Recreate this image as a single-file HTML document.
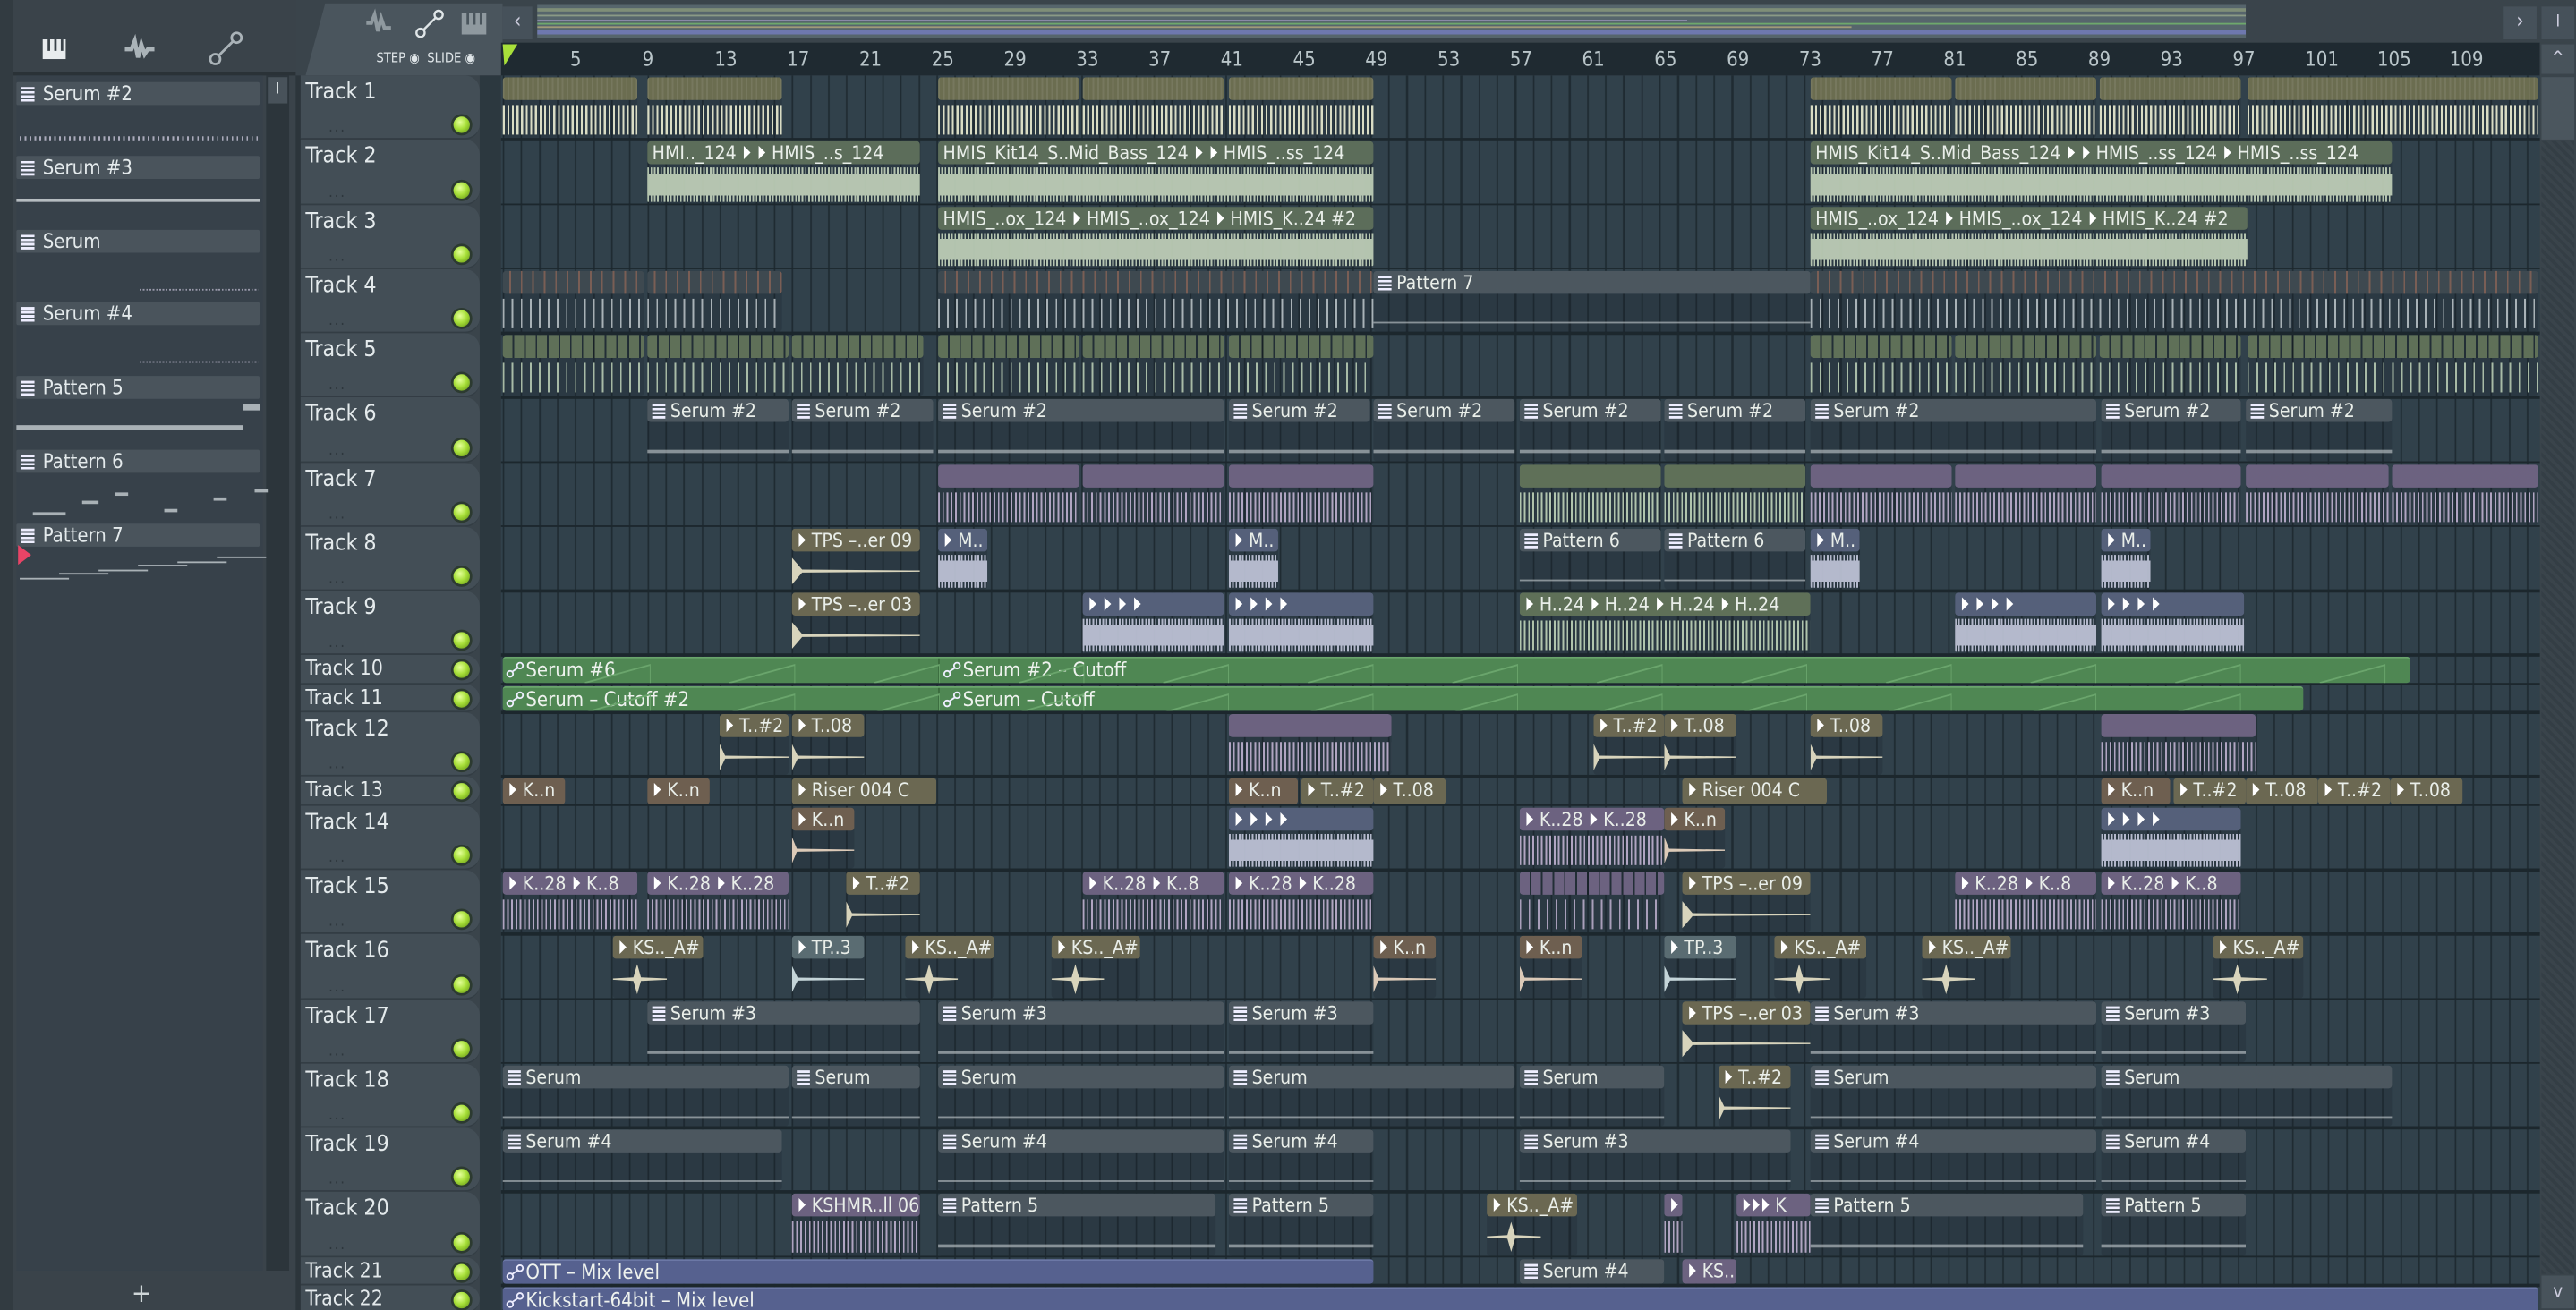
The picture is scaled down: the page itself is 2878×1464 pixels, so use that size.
<!DOCTYPE html>
<html><head><meta charset="utf-8">
<style>
html,body{margin:0;padding:0;width:2878px;height:1464px;overflow:hidden;background:#2f3b42;}
#w{position:absolute;left:0;top:0;width:1568px;height:798px;transform-origin:0 0;transform:scale(1.835459,1.834586);font-family:"Liberation Sans Narrow","DejaVu Sans Condensed","Liberation Sans",sans-serif;font-stretch:condensed;color:#dfe6e8;overflow:hidden;background:#3a444b;}
.a{position:absolute;box-sizing:border-box;}
.clip{position:absolute;box-sizing:border-box;overflow:hidden;border-radius:2px;}
.hd{position:absolute;left:0;right:0;top:0;height:14px;font-size:11.5px;line-height:14px;padding-left:3px;white-space:nowrap;color:#e9eee9;border-radius:2px;}
.bd{position:absolute;left:0;right:0;top:15px;bottom:0;}
.th{position:absolute;left:183px;width:109px;background:#434e56;border-radius:0 9px 9px 0;box-sizing:border-box;border-bottom:1px solid #333d44;}
.th .n{position:absolute;left:3px;top:2px;font-size:13.5px;color:#e4eaec;}
.led{position:absolute;left:276px;width:10px;height:10px;border-radius:50%;background:radial-gradient(circle at 40% 35%,#e4ff9a 0,#a8e03a 45%,#5f8f10 100%);box-shadow:0 0 0 1.5px #2c3a30;}
.dots{position:absolute;left:200px;font-size:9px;color:#2d363c;letter-spacing:1px;}
.pi{position:absolute;left:10px;width:148px;}
.pih{height:14px;background:#4a545c;font-size:12px;line-height:14px;padding-left:16px;position:relative;color:#e4eaec;border-radius:1px;}
.ic{position:absolute;left:3px;top:3px;width:8px;height:9px;background:repeating-linear-gradient(#eef 0 1.5px,#4a545c 1.5px 2.5px);}
.num{position:absolute;top:29px;font-size:12px;color:#b9c5c9;}
</style></head><body>
<div id="w">
<div class="a" style="left:0;top:0;width:8px;height:798px;background:#323b41"></div>
<div class="a" style="left:8px;top:0;width:172px;height:798px;background:#3a434a"></div>
<div class="a" style="left:8px;top:44px;width:172px;height:2px;background:#2a3237"></div>
<div class="a" style="left:10px;top:46px;width:150px;height:728px;background:#37414a"></div>
<div class="a" style="left:162px;top:46px;width:14px;height:728px;background:#2c353b"></div>
<div class="a" style="left:163px;top:47px;width:12px;height:16px;background:#48525a;font-size:9px;text-align:center;line-height:16px;">I</div>
<div class="a" style="left:80px;top:778px;font-size:16px;color:#cfd6d8">+</div>
<svg class="a" style="left:20px;top:18px" width="150" height="26">
 <rect x="6" y="6" width="14" height="12" fill="#e8ecee"/><rect x="9" y="6" width="1.5" height="7" fill="#3a434a"/><rect x="13" y="6" width="1.5" height="7" fill="#3a434a"/><rect x="17" y="6" width="1.5" height="7" fill="#3a434a"/>
 <path d="M56 12 h4 l2-5 l2 10 l2-8 l2 6 l2-3 h4" stroke="#aab3b8" stroke-width="2.5" fill="none"/>
 <circle cx="111" cy="18" r="3" fill="none" stroke="#aab3b8" stroke-width="1.5"/><circle cx="124" cy="5" r="3" fill="none" stroke="#aab3b8" stroke-width="1.5"/><path d="M113 16 L122 7" stroke="#aab3b8" stroke-width="1.5"/>
</svg>
<div class="a" style="left:186px;top:2px;width:120px;height:44px;background:#4a555d;border-radius:12px 0 0 0;clip-path:polygon(10% 0,100% 0,100% 100%,0 100%);"></div>
<svg class="a" style="left:220px;top:4px" width="86" height="20">
 <path d="M3 10 h3 l2-5 l2 10 l2-8 l2 6 h4" stroke="#8f999f" stroke-width="2.2" fill="none"/>
 <circle cx="36" cy="16" r="2.5" fill="none" stroke="#e0e6e8" stroke-width="1.3"/><circle cx="47" cy="5" r="2.5" fill="none" stroke="#e0e6e8" stroke-width="1.3"/><path d="M38 14 L45 7" stroke="#e0e6e8" stroke-width="1.3"/>
 <rect x="61" y="4" width="15" height="13" fill="#8f999f"/><rect x="64" y="4" width="1.5" height="7" fill="#4a555d"/><rect x="68" y="4" width="1.5" height="7" fill="#4a555d"/><rect x="72" y="4" width="1.5" height="7" fill="#4a555d"/>
</svg>
<div class="a" style="left:229px;top:31px;font-size:8px;color:#dfe5e8;">STEP &#9673;&nbsp; SLIDE &#9673;</div>
<div class="a" style="left:306px;top:0;width:1262px;height:26px;background:#3a444b"></div>
<div class="a" style="left:306px;top:4px;width:18px;height:20px;background:#46515a;font-size:13px;text-align:center;line-height:20px;color:#ccd">&lsaquo;</div>
<div class="a" style="left:327px;top:3px;width:1040px;height:20px;background:#56656c;overflow:hidden">
 <div class="a" style="left:0;top:2px;width:1040px;height:2px;background:#7f8e78"></div>
 <div class="a" style="left:0;top:6px;width:1040px;height:1px;background:#8a9a86"></div>
 <div class="a" style="left:0;top:9px;width:700px;height:1px;background:#8a8aa8"></div>
 <div class="a" style="left:0;top:11px;width:1040px;height:1px;background:#6ea86c"></div>
 <div class="a" style="left:0;top:13px;width:800px;height:1px;background:#a09a78"></div>
 <div class="a" style="left:0;top:15px;width:1040px;height:3px;background:#6e78ae"></div>
</div>
<div class="a" style="left:1524px;top:4px;width:20px;height:20px;background:#46515a;font-size:13px;text-align:center;line-height:20px;color:#ccd">&rsaquo;</div>
<div class="a" style="left:1547px;top:4px;width:20px;height:20px;background:#46515a;font-size:10px;text-align:center;line-height:20px;color:#ccd">I</div>
<div class="a" style="left:305px;top:26px;width:1241px;height:20px;background:#1f2a31"></div>
<svg class="a" style="left:305px;top:27px" width="12" height="14"><path d="M1 0 L10 0 L2 13 Z" fill="#a8e03a"/></svg>
<div class="a" style="left:1546px;top:26px;width:22px;height:772px;background:#3a444b"></div>
<div class="a" style="left:1547px;top:27px;width:20px;height:18px;background:#48535b;font-size:11px;text-align:center;line-height:18px;color:#ccd">^</div>
<div class="a" style="left:1547px;top:47px;width:20px;height:38px;background:#4b565e"></div>
<div class="a" style="left:1547px;top:86px;width:20px;height:690px;background:repeating-linear-gradient(45deg,#343e45 0 2px,#3a444b 2px 4px)"></div>
<div class="a" style="left:1547px;top:777px;width:20px;height:20px;background:#48535b;font-size:11px;text-align:center;line-height:20px;color:#ccd">v</div>
<div class="a" style="left:180px;top:46px;width:3px;height:752px;background:#2c353b"></div>
<div class="a" style="left:292px;top:46px;width:13px;height:752px;background:#2c383f"></div>
<div id="grid" class="a" style="left:305px;top:46px;width:1241px;height:752px;background-color:#31414b;background-image:repeating-linear-gradient(90deg,#1f2b32 0 1px,transparent 1px 11px);background-position:1px 0;"></div>
<div id="dyn"></div>
</div>
<script>
var dyn=document.getElementById('dyn'),h='';
for(var n=1;n<=109;n+=4){var x=306+(n-1)*11;h+='<div class="num" style="left:'+(x+(n==1?1:-3))+'px">'+(n==1?'':n)+'</div>';}
var H=39.25,S=17.44,hs=[H,H,H,H,H,H,H,H,H,S,S,H,S,H,H,H,H,H,H,H,S,S],tops=[],y=46;
for(var i=0;i<22;i++){tops.push(y);y+=hs[i];}
for(var i=0;i<22;i++){var t=tops[i],hh=hs[i];
 h+='<div class="th" style="top:'+t+'px;height:'+hh+'px"><div class="n" style="'+(hh<20?'top:0;font-size:12.5px':'')+'">Track '+(i+1)+'</div></div>';
 h+='<div class="led" style="top:'+(t+hh-(hh<20?13.5:14))+'px"></div>';
 if(hh>20)h+='<div class="dots" style="top:'+(t+hh-12)+'px">...</div>';
 h+='<div class="a" style="left:305px;top:'+(t+hh-1)+'px;width:1241px;height:1.5px;background:#1c272d"></div>';
}
var pk=[['Serum #2','d'],['Serum #3','l'],['Serum','t'],['Serum #4','t'],['Pattern 5','p5'],['Pattern 6','p6'],['Pattern 7','p7']];
for(var i=0;i<7;i++){var t=50+i*44.8;
 h+='<div class="pi" style="top:'+t+'px"><div class="pih"><span class="ic"></span>'+pk[i][0]+'</div></div>';
 var b=t+15,k=pk[i][1];
 if(k=='d')h+='<div class="a" style="left:12px;top:'+(b+18)+'px;width:145px;height:3px;background:repeating-linear-gradient(90deg,#aab 0 1px,transparent 1px 3px)"></div>';
 if(k=='l')h+='<div class="a" style="left:10px;top:'+(b+11)+'px;width:148px;height:2px;background:#b5bcc0"></div>';
 if(k=='t')h+='<div class="a" style="left:85px;top:'+(b+21)+'px;width:72px;height:1px;background:repeating-linear-gradient(90deg,#99a 0 1px,transparent 1px 2px)"></div>';
 if(k=='p5'){h+='<div class="a" style="left:10px;top:'+(b+15)+'px;width:138px;height:3px;background:#a9b1b6"></div><div class="a" style="left:148px;top:'+(b+2)+'px;width:10px;height:4px;background:#a9b1b6"></div>';}
 if(k=='p6'){[[10,30,15],[40,50,8],[60,45,3],[90,60,13],[120,85,6],[145,148,1]].forEach(function(q){h+='<div class="a" style="left:'+(q[0]+10)+'px;top:'+(b+q[2]+8)+'px;width:'+(Math.max(8,q[1]-q[0]))+'px;height:1.5px;background:#a9b1b6"></div>'});}
 if(k=='p7'){for(var j=0;j<6;j++)h+='<div class="a" style="left:'+(12+j*24)+'px;top:'+(b+18-j*2.5)+'px;width:30px;height:1px;background:#a9b1b6"></div>';
  h+='<svg class="a" style="left:10px;top:'+(b-3)+'px" width="10" height="14"><path d="M1 1 L9 7 L1 13 Z" fill="#e84466"/></svg>';}
}
var C={o:['#6b6d50','#d9dcc4','spk'],h:['#5c6d5a','#c4d4bc','den'],p:['#4c575f','#b0b8bc','pat'],u:['#6c6280','#c8b8d8','spk'],b:['#55607a','#c4c8dc','den'],t:['#6b6852','#d8d4bc','dec'],k:['#6e5f50','#dccab8','dec'],g:['#5f7058','#c8dcc0','spk'],s:['#6b6852','#d8d4bc','star'],c:['#5a6c72','#c4d4d8','dec'],a:['#4f8753'],v:['#56618f'],d:['#3f4a50','#c8d0d4','spk']};
var T=[
[[306,388,'o',''],[394,476,'o',''],[571,657,'o',''],[659,745,'o',''],[748,836,'o',''],[1102,1188,'o',''],[1190,1276,'o',''],[1278,1364,'o',''],[1368,1545,'o','']],
[[394,560,'h','HMI.._124 ▸ ▸ HMIS_..s_124'],[571,836,'h','HMIS_Kit14_S..Mid_Bass_124 ▸ ▸ HMIS_..ss_124'],[1102,1456,'h','HMIS_Kit14_S..Mid_Bass_124 ▸ ▸ HMIS_..ss_124 ▸ HMIS_..ss_124']],
[[571,836,'h','HMIS_..ox_124 ▸ HMIS_..ox_124 ▸ HMIS_K..24 #2'],[1102,1368,'h','HMIS_..ox_124 ▸ HMIS_..ox_124 ▸ HMIS_K..24 #2']],
[[306,392,'d2',''],[394,476,'d2',''],[571,836,'d2',''],[836,1102,'p','Pattern 7'],[1102,1545,'d2','']],
[[306,392,'g2',''],[394,480,'g2',''],[482,562,'g2',''],[571,657,'g2',''],[659,745,'g2',''],[748,836,'g2',''],[1102,1188,'g2',''],[1190,1276,'g2',''],[1278,1364,'g2',''],[1368,1545,'g2','']],
[[394,480,'p','Serum #2'],[482,568,'p','Serum #2'],[571,745,'p','Serum #2'],[748,834,'p','Serum #2'],[836,922,'p','Serum #2'],[925,1011,'p','Serum #2'],[1013,1099,'p','Serum #2'],[1102,1276,'p','Serum #2'],[1279,1364,'p','Serum #2'],[1367,1456,'p','Serum #2']],
[[571,657,'u',''],[659,745,'u',''],[748,836,'u',''],[925,1011,'g',''],[1013,1099,'g',''],[1102,1188,'u',''],[1190,1276,'u',''],[1279,1364,'u',''],[1367,1454,'u',''],[1456,1545,'u','']],
[[482,560,'t','▸ TPS –..er 09'],[571,601,'b','▸ M..'],[748,778,'b','▸ M..'],[925,1011,'p','Pattern 6'],[1013,1099,'p','Pattern 6'],[1102,1132,'b','▸ M..'],[1279,1309,'b','▸ M..']],
[[482,560,'t','▸ TPS –..er 03'],[659,745,'b','▸  ▸  ▸  ▸'],[748,836,'b','▸  ▸  ▸  ▸'],[925,1102,'g','▸ H..24 ▸ H..24 ▸ H..24 ▸ H..24'],[1190,1276,'b','▸  ▸  ▸  ▸'],[1279,1366,'b','▸  ▸  ▸  ▸']],
[[306,1467,'a','Serum #6',571,'Serum #2 – Cutoff']],
[[306,1402,'a','Serum – Cutoff #2',571,'Serum – Cutoff']],
[[438,480,'t','▸ T..#2'],[482,526,'t','▸ T..08'],[748,847,'u',''],[970,1013,'t','▸ T..#2'],[1013,1057,'t','▸ T..08'],[1102,1146,'t','▸ T..08'],[1279,1373,'u','']],
[[306,344,'k','▸ K..n'],[394,432,'k','▸ K..n'],[482,570,'t','▸ Riser 004 C'],[748,790,'k','▸ K..n'],[792,836,'t','▸ T..#2'],[836,880,'t','▸ T..08'],[1024,1112,'t','▸ Riser 004 C'],[1279,1321,'k','▸ K..n'],[1323,1367,'t','▸ T..#2'],[1367,1411,'t','▸ T..08'],[1411,1455,'t','▸ T..#2'],[1455,1499,'t','▸ T..08']],
[[482,520,'k','▸ K..n'],[748,836,'b','▸  ▸  ▸  ▸'],[925,1013,'u','▸ K..28 ▸ K..28'],[1013,1050,'k','▸ K..n'],[1279,1364,'b','▸  ▸  ▸  ▸']],
[[306,388,'u','▸ K..28 ▸ K..8'],[394,480,'u','▸ K..28 ▸ K..28'],[515,560,'t','▸ T..#2'],[659,745,'u','▸ K..28 ▸ K..8'],[748,836,'u','▸ K..28 ▸ K..28'],[925,1013,'u2',''],[1024,1102,'t','▸ TPS –..er 09'],[1190,1276,'u','▸ K..28 ▸ K..8'],[1279,1364,'u','▸ K..28 ▸ K..8']],
[[373,428,'s','▸ KS.._A#'],[482,526,'c','▸ TP..3'],[551,605,'s','▸ KS.._A#'],[640,694,'s','▸ KS.._A#'],[836,874,'k','▸ K..n'],[925,963,'k','▸ K..n'],[1013,1057,'c','▸ TP..3'],[1080,1136,'s','▸ KS.._A#'],[1170,1224,'s','▸ KS.._A#'],[1347,1402,'s','▸ KS.._A#']],
[[394,560,'p','Serum #3'],[571,745,'p','Serum #3'],[748,836,'p','Serum #3'],[1024,1102,'t','▸ TPS –..er 03'],[1102,1276,'p','Serum #3'],[1279,1367,'p','Serum #3']],
[[306,480,'p','Serum'],[482,560,'p','Serum'],[571,745,'p','Serum'],[748,922,'p','Serum'],[925,1013,'p','Serum'],[1046,1090,'t','▸ T..#2'],[1102,1276,'p','Serum'],[1279,1456,'p','Serum']],
[[306,476,'p','Serum #4'],[571,745,'p','Serum #4'],[748,836,'p','Serum #4'],[925,1090,'p','Serum #3'],[1102,1276,'p','Serum #4'],[1279,1367,'p','Serum #4']],
[[482,560,'u','▸ KSHMR..ll 06'],[571,740,'p','Pattern 5'],[748,836,'p','Pattern 5'],[905,960,'s','▸ KS.._A#'],[1013,1024,'u','▸'],[1057,1102,'u','▸▸▸ K'],[1102,1268,'p','Pattern 5'],[1279,1367,'p','Pattern 5']],
[[306,836,'v','OTT – Mix level'],[925,1013,'p','Serum #4'],[1024,1057,'u','▸ KS..']],
[[306,1545,'v','Kickstart-64bit – Mix level']]
];
function autoIcon(){return '<svg width="11" height="10" style="vertical-align:-1px;margin-right:1px"><circle cx="2.5" cy="7.5" r="1.8" fill="none" stroke="#eef" stroke-width="1"/><circle cx="8.5" cy="2.5" r="1.8" fill="none" stroke="#eef" stroke-width="1"/><path d="M4 6 L7 4" stroke="#eef"/></svg>';}
for(var i=0;i<22;i++){var t=tops[i],hh=hs[i];
 T[i].forEach(function(c){
  var x=c[0],w=c[1]-c[0],ty=c[2],lab=c[3];
  if(ty=='a'||ty=='v'){
   h+='<div class="clip" style="left:'+x+'px;top:'+(t+1)+'px;width:'+w+'px;height:'+(hh-2)+'px;background:'+C[ty][0]+';border-top:1px solid '+(ty=='a'?'#6aa56c':'#6c78a6')+';font-size:12px;line-height:'+(hh-3)+'px;padding-left:2px;color:#eef2ee;white-space:nowrap">'+autoIcon()+lab;
   if(c[4])h+='<span style="position:absolute;left:'+(c[4]-x)+'px;top:0;border-left:1px solid #3b6b3e;padding-left:2px">'+autoIcon()+c[5]+'</span>';
   if(ty=='a'){for(var z=x+90;z<c[1];z+=88)h+='<svg class="a" style="left:'+(z-x-40)+'px;top:0" width="40" height="16"><path d="M0 15 L40 4 L40 16" stroke="#6aa56c" fill="none" stroke-width="1"/></svg>';}
   h+='</div>';return;}
  var base=ty.replace('2',''),col=C[base],sm=hh<20;
  var hb=col[0];
  var hdr='';
  if(base=='o'){hdr='background:'+hb+' repeating-linear-gradient(90deg,rgba(255,255,255,.08) 0 1px,transparent 1px 3px);';}
  else if(ty=='d2'){hdr='background:repeating-linear-gradient(90deg,#3e4950 0 4px,#7a5e55 4px 5px,#3e4950 5px 7px);';}
  else if(ty=='u2'||ty=='g2'){hdr='background:repeating-linear-gradient(90deg,'+hb+' 0 6px,rgba(0,0,0,.2) 6px 7px);';}
  else hdr='background:'+hb+';';
  var ic=(base=='p')?'<span style="display:inline-block;width:8px;height:9px;margin:0 3px -1px 0;background:repeating-linear-gradient(#eef 0 1.5px,'+hb+' 1.5px 2.5px)"></span>':'';
  var txt=lab.replace(/▸/g,'<b style="font-weight:normal;color:#fff">⏵</b>');
  h+='<div class="clip" style="left:'+x+'px;top:'+(t+1)+'px;width:'+w+'px;height:'+(hh-2)+'px;background:rgba(24,34,40,.22)">';
  h+='<div class="hd" style="'+hdr+(sm?'height:'+(hh-2)+'px;line-height:'+(hh-2)+'px;':'')+'">'+ic+txt+'</div>';
  if(!sm){
   var wc=col[1],kind=col[2],bg='';
   if(kind=='spk')bg='background:repeating-linear-gradient(90deg,'+wc+' 0 1px,transparent 1px 2.6px);opacity:.85;top:17px;bottom:2px;';
   else if(kind=='den')bg='background-image:linear-gradient(transparent 18%,'+wc+' 18%,'+wc+' 82%,transparent 82%),repeating-linear-gradient(90deg,'+wc+' 0 1px,transparent 1px 2px);background-size:100% 100%,100% 100%;background-repeat:no-repeat;opacity:.9;top:16px;bottom:1px;';
   else if(kind=='dec')bg='background:'+wc+';clip-path:polygon(0 5%,8% 45%,100% 48%,100% 52%,8% 55%,0 95%);top:17px;bottom:2px;';
   else if(kind=='star')bg='background:'+wc+';clip-path:polygon(0 48%,38% 44%,45% 0,52% 44%,100% 48%,100% 52%,52% 56%,45% 100%,38% 56%,0 52%);width:60%;top:17px;bottom:2px;';
   else if(kind=='pat')bg='top:auto;bottom:5px;height:1.5px;background:#b0b8bc;opacity:.7;';
   if(base=='o')bg='background:repeating-linear-gradient(90deg,'+wc+' 0 1.2px,transparent 1.2px 2.8px);top:17px;bottom:2px;';
   if(ty=='u2'||ty=='g2'||ty=='d2')bg='background:repeating-linear-gradient(90deg,'+wc+' 0 1px,transparent 1px 5.5px);opacity:.8;top:17px;bottom:2px;';
   h+='<div class="bd" style="'+bg+'"></div>';
  }
  h+='</div>';
 });
}
dyn.innerHTML=h;
</script>
</body></html>
